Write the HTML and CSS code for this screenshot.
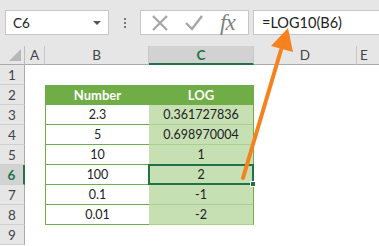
FILE: index.html
```html
<!DOCTYPE html>
<html lang="en">
<head>
    <meta charset="UTF-8">
    <title>LOG10 example</title>
    <link rel="stylesheet" href="styles.css">
</head>
<body>
    <div class="window">
        <div class="formula-bar">
            <div class="name-box">
                <span>C6</span>
                <span class="caret"></span>
            </div>
            <div class="grip"><i></i><i></i><i></i></div>
            <div class="buttons">
                <svg class="btn" width="20" height="20" viewBox="0 0 20 20"><path d="M3 3 L17 17 M17 3 L3 17" stroke="#a6a6a6" stroke-width="2.2" fill="none"/></svg>
                <svg class="btn" width="20" height="20" viewBox="0 0 20 20"><path d="M2 10 L8 16 L18 3" stroke="#a6a6a6" stroke-width="2.4" fill="none"/></svg>
                <span class="fx">fx</span>
            </div>
            <div class="formula">=LOG10(B6)</div>
        </div>

        <div class="sheet">
            <div class="hd corner"></div>
            <div class="hd col">A</div>
            <div class="hd col">B</div>
            <div class="hd col active">C</div>
            <div class="hd col">D</div>
            <div class="hd col last">E</div>

            <div class="hd row">1</div>
            <div class="cell"></div><div class="cell"></div><div class="cell"></div><div class="cell"></div><div class="cell"></div>

            <div class="hd row">2</div>
            <div class="cell"></div>
            <div class="cell th num">Number</div>
            <div class="cell th val">LOG</div>
            <div class="cell"></div><div class="cell"></div>

            <div class="hd row">3</div>
            <div class="cell"></div>
            <div class="cell num">2.3</div>
            <div class="cell val">0.361727836</div>
            <div class="cell"></div><div class="cell"></div>

            <div class="hd row">4</div>
            <div class="cell"></div>
            <div class="cell num">5</div>
            <div class="cell val">0.698970004</div>
            <div class="cell"></div><div class="cell"></div>

            <div class="hd row">5</div>
            <div class="cell"></div>
            <div class="cell num">10</div>
            <div class="cell val">1</div>
            <div class="cell"></div><div class="cell"></div>

            <div class="hd row active">6</div>
            <div class="cell"></div>
            <div class="cell num">100</div>
            <div class="cell val selected">2<span class="handle"></span></div>
            <div class="cell"></div><div class="cell"></div>

            <div class="hd row">7</div>
            <div class="cell"></div>
            <div class="cell num">0.1</div>
            <div class="cell val">-1</div>
            <div class="cell"></div><div class="cell"></div>

            <div class="hd row">8</div>
            <div class="cell"></div>
            <div class="cell num">0.01</div>
            <div class="cell val">-2</div>
            <div class="cell"></div><div class="cell"></div>

            <div class="hd row">9</div>
            <div class="cell"></div><div class="cell"></div><div class="cell"></div><div class="cell"></div><div class="cell"></div>
        </div>

        <!-- callout arrow from the selected cell up to the formula -->
        <svg class="arrow" width="379" height="246" viewBox="0 0 379 246">
            <line x1="243" y1="178" x2="281" y2="50" stroke="#f5821f" stroke-width="4" stroke-linecap="round"/>
            <polygon points="288,28 271,46 293,52" fill="#f5821f"/>
        </svg>
    </div>
</body>
</html>
```

FILE: styles.css
```css
* {
    box-sizing: border-box;
}
body {
    margin: 0;
    font-family: Lato, "Open Sans", sans-serif;
    background: #fff;
}
.window {
    position: relative;
    width: 379px;
    height: 246px;
    overflow: hidden;
}
.formula-bar {
    display: flex;
    align-items: center;
    height: 46px;
    padding: 0 0 1px 5px;
    background: #e6e6e6;
}
.name-box {
    display: flex;
    align-items: center;
    justify-content: space-between;
    width: 104px;
    height: 25px;
    padding: 0 7px 0 7px;
    background: #fff;
    border: 1px solid #c6c6c6;
    font-size: 13.5px;
    color: #222;
}
.caret {
    width: 0;
    height: 0;
    border-left: 4px solid transparent;
    border-right: 4px solid transparent;
    border-top: 4px solid #555;
}
.grip {
    display: flex;
    flex-direction: column;
    gap: 2px;
    width: 31px;
    align-items: center;
}
.grip i {
    width: 2px;
    height: 2px;
    background: #777;
}
.buttons {
    display: flex;
    align-items: center;
    gap: 14px;
    width: 109px;
    height: 25px;
    padding-left: 9px;
    background: #fff;
    border: 1px solid #c6c6c6;
}
.fx {
    margin-left: 2px;
    font-family: "Liberation Serif", serif;
    font-style: italic;
    font-size: 23px;
    line-height: 23px;
    color: #7f7f7f;
    letter-spacing: -1px;
}
.formula {
    flex: 1;
    height: 25px;
    margin-left: 4px;
    padding: 3px 0 0 8px;
    background: #fff;
    border: 1px solid #c6c6c6;
    border-right: 0;
    font-size: 14.5px;
    color: #222;
}
.sheet {
    display: grid;
    grid-template-columns: 25px 20px 104px 105px 103px 22px;
    grid-template-rows: 19px repeat(9, 20px);
    font-size: 12.5px;
}
.hd {
    display: flex;
    align-items: center;
    justify-content: center;
    background: #e6e6e6;
    color: #444;
    font-size: 13.5px;
}
.corner {
    position: relative;
    border-right: 1px solid #bdbdbd;
    border-bottom: 1px solid #ababab;
}
.corner::after {
    content: "";
    position: absolute;
    right: 3px;
    bottom: 3px;
    border-left: 12px solid transparent;
    border-bottom: 12px solid #b8b8b8;
}
.col {
    border-right: 1px solid #c8c8c8;
    border-bottom: 1px solid #ababab;
}
.col.last {
    border-right: 0;
    justify-content: flex-start;
    padding-left: 3px;
}
.col.active {
    background: #d2d2d2;
    color: #217346;
    font-weight: bold;
    border-bottom: 2px solid #217346;
}
.row {
    border-right: 1px solid #ababab;
    border-bottom: 1px solid #cfcfcf;
}
.row.active {
    background: #d2d2d2;
    color: #217346;
    font-weight: bold;
    border-right: 2px solid #217346;
}
.cell {
    display: flex;
    align-items: center;
    justify-content: center;
    color: #222;
}
.num {
    background: #fff;
    border-left: 1px solid #70ad47;
    border-bottom: 1px solid #70ad47;
}
.val {
    background: #c6e0b4;
    border-right: 1px solid #70ad47;
    border-bottom: 1px solid #a9d08e;
}
.th {
    background: #70ad47;
    color: #fff;
    font-weight: bold;
    font-size: 13px;
    border-bottom: 1px solid #70ad47;
}
.selected {
    position: relative;
    margin: -1px 0 0 -1px;
    border: 2px solid #217346;
}
.handle {
    position: absolute;
    right: -4px;
    bottom: -4px;
    width: 6px;
    height: 6px;
    background: #217346;
    border: 1px solid #fff;
}
.arrow {
    position: absolute;
    left: 0;
    top: 0;
}
```
